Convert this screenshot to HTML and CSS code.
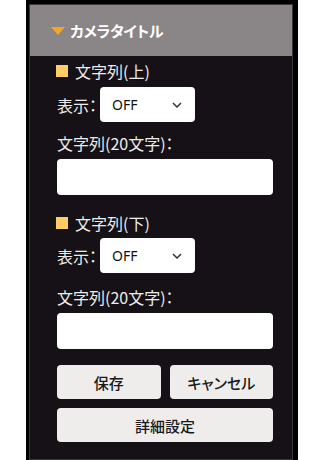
FILE: index.html
```html
<!DOCTYPE html>
<html lang="ja">
<head>
<meta charset="utf-8">
<link rel="stylesheet" href="styles.css">
</head>
<body>
<div class="frame">
  <div class="panel">
    <div class="header">
      <span class="tri"></span>
      <span class="title">カメラタイトル</span>
    </div>
    <div class="content">
      <div class="sec-title first"><span class="sq"></span><span>文字列(上)</span></div>
      <div class="sel-row">
        <span class="lbl">表示：</span>
        <div class="select"><span>OFF</span>
          <svg width="10" height="6" viewBox="0 0 10 6"><path d="M1 1 L5 5 L9 1" fill="none" stroke="#333" stroke-width="1.5"/></svg>
        </div>
      </div>
      <div class="field-lbl l1">文字列(20文字)：</div>
      <div class="input"></div>

      <div class="sec-title second"><span class="sq"></span><span>文字列(下)</span></div>
      <div class="sel-row s2">
        <span class="lbl">表示：</span>
        <div class="select"><span>OFF</span>
          <svg width="10" height="6" viewBox="0 0 10 6"><path d="M1 1 L5 5 L9 1" fill="none" stroke="#333" stroke-width="1.5"/></svg>
        </div>
      </div>
      <div class="field-lbl l2">文字列(20文字)：</div>
      <div class="input"></div>

      <div class="btn-row">
        <div class="btn">保存</div>
        <div class="btn">キャンセル</div>
      </div>
      <div class="btn wide">詳細設定</div>
    </div>
    <div class="sep"></div>
  </div>
</div>
</body>
</html>
```

FILE: styles.css
```css
html, body {
  margin: 0;
  padding: 0;
  background: #ffffff;
  height: 460px;
  overflow: hidden;
}
body {
  font-family: "Noto Sans CJK JP", "Noto Sans", sans-serif;
  font-feature-settings: "palt";
}
.frame {
  margin-left: 26px;
  width: 272px;
  height: 460px;
  background: #000;
  padding: 4px 5px 0 3px;
  box-sizing: border-box;
}
.panel {
  height: 456px;
  background: #151116;
  border: 1px solid #3a363b;
  border-bottom: none;
  box-sizing: border-box;
  display: flex;
  flex-direction: column;
}
.header {
  height: 51px;
  background: #8a8687;
  display: flex;
  align-items: center;
  padding-left: 21px;
  flex-shrink: 0;
}
.tri {
  width: 0;
  height: 0;
  border-left: 7px solid transparent;
  border-right: 7px solid transparent;
  border-top: 8px solid #f5a623;
  margin-right: 5px;
  margin-top: 1px;
}
.title {
  color: #ffffff;
  font-weight: bold;
  font-size: 15px;
  letter-spacing: -0.3px;
}
.content {
  padding: 0 19px 0 27px;
  display: flex;
  flex-direction: column;
  color: #ececec;
  font-size: 16px;
}
.sec-title {
  display: flex;
  align-items: center;
  height: 20px;
  line-height: 20px;
}
.sec-title.first { margin-top: 5px; }
.sec-title.second { margin-top: 18px; }
.sq {
  width: 12px;
  height: 12px;
  background: #ffcc66;
  margin-right: 7px;
  margin-left: -1px;
}
.sel-row {
  display: flex;
  align-items: center;
  margin-top: 6px;
}
.sel-row.s2 { margin-top: 5px; }
.lbl {
  width: 43px;
  line-height: 20px;
}
.select {
  width: 95px;
  height: 35px;
  background: #fff;
  border-radius: 4px;
  box-sizing: border-box;
  display: flex;
  align-items: center;
  justify-content: space-between;
  padding: 0 13px 0 12px;
  color: #111;
  font-size: 14px;
  font-family: "Noto Sans", sans-serif;
}
.field-lbl {
  line-height: 20px;
  height: 20px;
}
.field-lbl.l1 { margin-top: 11px; }
.field-lbl.l2 { margin-top: 14px; }
.input {
  margin-top: 6px;
  height: 36px;
  background: #fff;
  border-radius: 4px;
}
.btn-row {
  display: flex;
  gap: 9px;
  margin-top: 16px;
}
.btn {
  flex: 1;
  height: 34px;
  background: #efedec;
  border-radius: 4px;
  color: #1a1a1a;
  font-size: 15px;
  font-weight: 500;
  display: flex;
  align-items: center;
  justify-content: center;
}
.btn.wide {
  flex: none;
  margin-top: 9px;
}
.sep {
  margin-top: auto;
  height: 1px;
  background: #3a363b;
}
```
